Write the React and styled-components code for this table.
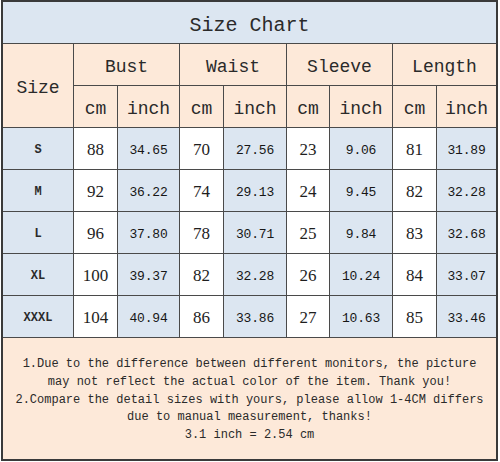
import React from "react";
import styled, { createGlobalStyle } from "styled-components";

const Global = createGlobalStyle`
  html, body { margin: 0; padding: 0; background: #ffffff; }
  body { font-family: "Liberation Mono", "DejaVu Sans Mono", monospace; color: #222; }
`;

const Chart = styled.div`
  margin: 0 0 0 1px;
  width: 493px;
  border: 2px solid #3a3a3a;
  background: #4a4a4a;
  display: grid;
  grid-template-columns: 70px 43px 61px 43px 62px 42px 62px 43px 59px;
  grid-template-rows: repeat(8, 41px) 121px;
  gap: 1px;
`;

const Cell = styled.div`
  display: flex;
  align-items: center;
  justify-content: center;
  box-sizing: border-box;
  padding-top: ${(p) => p.$shift || 2}px;
  background: ${(p) => p.$bg};
  grid-column: ${(p) => p.$col || "auto"};
  grid-row: ${(p) => p.$row || "auto"};
  white-space: nowrap;
`;

const Title = styled(Cell)`
  font-size: 20px;
  color: #2a2a2a;
`;

const Head = styled(Cell)`
  font-size: 18px;
  color: #2a2a2a;
`;

const SizeLabel = styled(Cell)`
  font-size: 12px;
  font-weight: bold;
  color: #2a2a2a;
`;

const CmValue = styled(Cell)`
  font-family: "Liberation Serif", "DejaVu Serif", serif;
  font-size: 17px;
  color: #1e1e1e;
`;

const InchValue = styled(Cell)`
  font-size: 13px;
  letter-spacing: -0.2px;
  color: #161616;
`;

const Footer = styled(Cell)`
  flex-direction: column;
  font-size: 12px;
  line-height: 17.75px;
  color: #2a2a2a;
`;

const BLUE = "#dce6f1";
const PEACH = "#fde9d9";
const WHITE = "#ffffff";

const groups = ["Bust", "Waist", "Sleeve", "Length"];

const rows = [
  ["S", 88, "34.65", 70, "27.56", 23, "9.06", 81, "31.89"],
  ["M", 92, "36.22", 74, "29.13", 24, "9.45", 82, "32.28"],
  ["L", 96, "37.80", 78, "30.71", 25, "9.84", 83, "32.68"],
  ["XL", 100, "39.37", 82, "32.28", 26, "10.24", 84, "33.07"],
  ["XXXL", 104, "40.94", 86, "33.86", 27, "10.63", 85, "33.46"],
];

const notes = [
  "1.Due to the difference between different monitors, the picture",
  "may not reflect the actual color of the item. Thank you!",
  "2.Compare the detail sizes with yours, please allow 1-4CM differs",
  "due to manual measurement, thanks!",
  "3.1 inch = 2.54 cm",
];

export default function App() {
  return (
    <>
      <Global />
      <Chart>
        <Title $bg={BLUE} $col="1 / span 9" $shift={6}>Size Chart</Title>
        <Head $bg={PEACH} $row="2 / span 2" $shift={4}>Size</Head>
        {groups.map((g) => (
          <Head key={g} $bg={PEACH} $col="span 2" $shift={4}>{g}</Head>
        ))}
        {groups.map((g) => (
          <React.Fragment key={g + "u"}>
            <Head $bg={PEACH} $shift={5}>cm</Head>
            <Head $bg={PEACH} $shift={5}>inch</Head>
          </React.Fragment>
        ))}
        {rows.map((r) => (
          <React.Fragment key={r[0]}>
            <SizeLabel $bg={BLUE} $shift={3}>{r[0]}</SizeLabel>
            {r.slice(1).map((v, i) =>
              i % 2 === 0 ? (
                <CmValue key={i} $bg={WHITE} $shift={2}>{v}</CmValue>
              ) : (
                <InchValue key={i} $bg={BLUE} $shift={3}>{v}</InchValue>
              )
            )}
          </React.Fragment>
        ))}
        <Footer $bg={PEACH} $col="1 / span 9" $shift={4}>
          {notes.map((n) => (
            <span key={n}>{n}</span>
          ))}
        </Footer>
      </Chart>
    </>
  );
}
